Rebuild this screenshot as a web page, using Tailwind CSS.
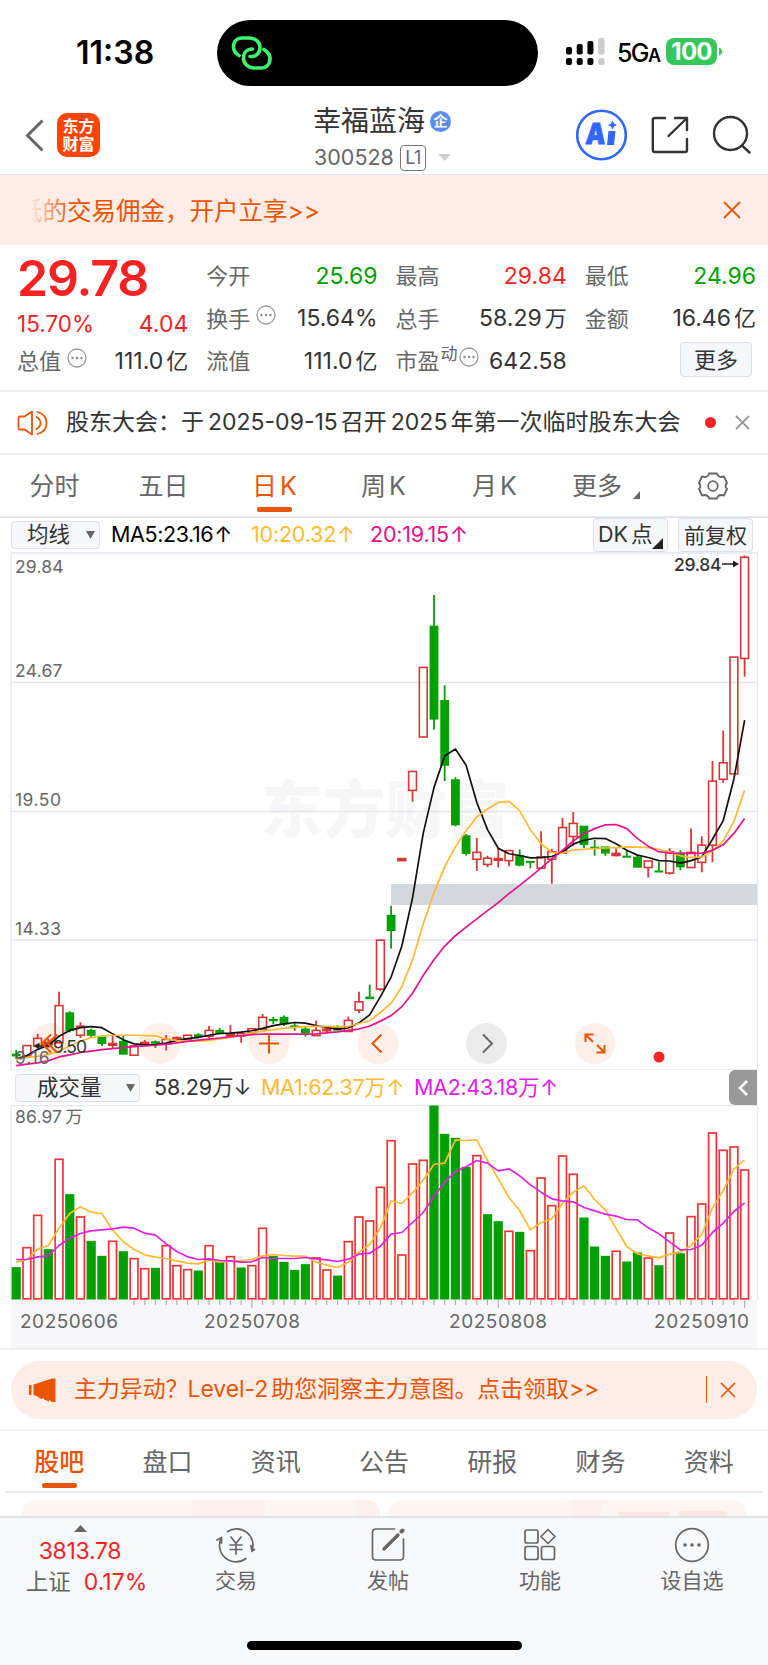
<!DOCTYPE html>
<html lang="zh-CN">
<head>
    <meta charset="UTF-8">
    <meta name="viewport" content="width=device-width, initial-scale=1.0">
    <title>幸福蓝海 300528</title>
    <script src="https://cdn.jsdelivr.net/npm/@tailwindcss/browser@4"></script>
</head>
<body class="bg-white font-[Inter,'Noto_Sans_CJK_SC',sans-serif] text-[#333] leading-none">
<div class="w-[768px] h-[1665px] flex flex-col overflow-hidden whitespace-nowrap">

    <!-- Status bar -->
    <div class="h-[96px] shrink-0 flex items-start">
        <div class="w-[217px] shrink-0 pt-[37px] pl-[76px] text-[32px] font-semibold text-black">11:38</div>
        <div class="w-[321px] shrink-0 h-[66px] mt-[20px] rounded-full bg-black flex items-center pl-[14px]">
            <svg width="42" height="36" viewBox="0 0 42 36" fill="none" stroke="#3cf56e" stroke-width="3.6" stroke-linecap="round">
                <path d="M8 20.500C4 18 2.500 14.500 2.500 12C2.500 6.500 6 3 11 3H18C25 3 29 7.500 29 12.500C29 18 25 21.500 21 21.500H19"/>
                <path d="M33 14.500C37 17 39 20 39 23.500C39 29 35.500 33 30 33H23C17 33 12.500 28.500 12.500 23C12.500 17.500 16 14 21.500 14"/>
            </svg>
        </div>
        <div class="pt-[38px] pl-[28px] flex items-start">
            <svg class="shrink-0" width="40" height="28" viewBox="0 0 40 28">
                <g fill="#000">
                    <rect x="0" y="9" width="6" height="7.500" rx="2"/><rect x="10.700" y="6" width="6" height="10.500" rx="2"/><rect x="21.400" y="3" width="6" height="13.500" rx="2"/>
                    <rect x="0" y="20" width="6" height="7" rx="2"/><rect x="10.700" y="20" width="6" height="7" rx="2"/><rect x="21.400" y="20" width="6" height="7" rx="2"/>
                </g>
                <g fill="#ccc"><rect x="32.100" y="0" width="6.500" height="16.500" rx="2"/><rect x="32.100" y="20" width="6.500" height="7" rx="2"/></g>
            </svg>
            <div class="w-[60px] shrink-0 pl-[11px] pt-[3px] text-[25px] font-medium text-black tracking-[-1.6px]">5G<span class="text-[18px] font-semibold">A</span></div>
            <div class="w-[51px] shrink-0 h-[27px] rounded-[8px] bg-[#34c759] text-white text-[24px] font-bold flex items-center justify-center tracking-[-0.8px]">100</div>
            <svg class="shrink-0" width="5" height="27" viewBox="0 0 5 27"><path d="M2 9.500Q5 10.500 5 13.500T2 17.500Z" fill="#34c759"/></svg>
        </div>
    </div>

    <!-- Header -->
    <header class="h-[79px] shrink-0 flex border-b border-[#e3e8ea]">
        <div class="w-[313px] flex items-start pt-[17px] pl-[25px]">
            <svg class="mt-[6px]" width="19" height="33" viewBox="0 0 19 33" fill="none" stroke="#666" stroke-width="3"><path d="M17.500 1.500L2.500 16.500L17.500 31.500"/></svg>
            <div class="ml-[13px] w-[43px] h-[44px] rounded-[10px] bg-[#ff4400] text-white text-[16px] font-bold leading-[18px] text-center pt-[4px]">东方<br>财富</div>
        </div>
        <div class="w-[263px] pt-[9px]">
            <div class="h-[32px] flex items-center text-[28px]">幸福蓝海
                <span class="ml-[5px] w-[21px] h-[21px] rounded-full bg-[#5b8def] text-white text-[14px] font-bold flex items-center justify-center">企</span>
            </div>
            <div class="mt-[7px] h-[27px] flex items-center text-[21.5px] text-[#666]">
                <span class="w-[87px] pl-[1px]">300528</span>
                <span class="w-[26px] h-[26px] border-[1.5px] border-[#777] rounded-[4px] text-[18px] flex items-center justify-center tracking-[-0.5px]">L1</span>
                <svg class="ml-[12px]" width="13" height="7" viewBox="0 0 13 7"><path d="M0 0H13L6.500 7Z" fill="#ccc"/></svg>
            </div>
        </div>
        <div class="pt-[13px] flex items-start">
            <svg width="51" height="52" viewBox="0 0 51 52">
                <circle cx="25.500" cy="26" r="24.300" fill="none" stroke="#3366ff" stroke-width="2.600"/>
                <text x="9" y="35.500" font-size="29" font-weight="900" fill="#3366ff" stroke="#3366ff" stroke-width="0.800" font-family="Inter" transform="skewX(-4) translate(2.500 0)" textLength="20" lengthAdjust="spacingAndGlyphs">A</text>
                <path d="M32.500 22H39.500L38 36H31Z" fill="#3366ff"/>
                <path d="M36.500 11.500L38 14.500L41 16L38 17.500L36.500 20.500L35 17.500L32 16L35 14.500Z" fill="#3366ff"/>
            </svg>
            <svg class="ml-[24px] mt-[7px]" width="38" height="38" viewBox="0 0 38 38" fill="none" stroke="#333" stroke-width="2.400" stroke-linecap="round" stroke-linejoin="round">
                <path d="M14 2H4Q1.800 2 1.800 4V34Q1.800 36 4 36H34Q36 36 36 34V23M24 2H36V14M36 2L17.500 20"/>
            </svg>
            <svg class="ml-[23px] mt-[6px]" width="40" height="39" viewBox="0 0 40 39" fill="none" stroke="#333" stroke-width="2.400" stroke-linecap="round">
                <circle cx="18.500" cy="18.500" r="16.500"/><path d="M30 30.500L37.500 37.500"/>
            </svg>
        </div>
    </header>

    <!-- Scrolling ad -->
    <div class="h-[70px] shrink-0 bg-[#fdede6] flex items-center justify-between pl-[18px] pr-[27px] text-[#ea5504]">
        <div class="flex items-center text-[24.500px] relative leading-[36px] pt-[2px]">
            <div>低的交易佣金，开户立享&gt;&gt;</div>
            <div class="absolute left-0 top-0 w-[48px] h-full bg-gradient-to-r from-[#fdede6] from-25% to-[#fdede6]/10"></div>
        </div>
        <svg width="18" height="18" viewBox="0 0 18 18" stroke="#ea5504" stroke-width="1.800"><path d="M1 1L17 17M17 1L1 17"/></svg>
    </div>

    <!-- Quote -->
    <section class="h-[147px] shrink-0 border-b-2 border-[#eeeeee] pt-[10px] pl-[17px] pr-[12px] grid grid-cols-4 gap-[18px] text-[22px]">
        <div>
            <div class="h-[46px] flex items-center text-[50px] font-semibold text-[#f72323] tracking-[-1.1px]">29.78</div>
            <div class="h-[47px] flex items-center justify-between text-[22.500px] text-[#f72323]"><span>15.70%</span><span class="text-[23px]">4.04</span></div>
            <div class="h-[26px] flex items-center justify-between">
                <span class="flex items-center text-[#666]">总值
                    <svg class="ml-[6px] -mt-[7px]" width="20" height="20" viewBox="0 0 20 20"><circle cx="10" cy="10" r="9" fill="none" stroke="#999" stroke-width="1.300"/><g fill="#888"><circle cx="5.500" cy="10" r="1.200"/><circle cx="10" cy="10" r="1.200"/><circle cx="14.500" cy="10" r="1.200"/></g></svg>
                </span><span class="text-[23px]">111.0<span class="ml-[3px] text-[22px]">亿</span></span>
            </div>
        </div>
        <div>
            <div class="h-[42.500px] flex items-center justify-between"><span class="text-[#666]">今开</span><span class="text-[23px] text-[#00a000]">25.69</span></div>
            <div class="h-[42.500px] flex items-center justify-between">
                <span class="flex items-center text-[#666]">换手
                    <svg class="ml-[6px] -mt-[8px]" width="20" height="20" viewBox="0 0 20 20"><circle cx="10" cy="10" r="9" fill="none" stroke="#999" stroke-width="1.300"/><g fill="#888"><circle cx="5.500" cy="10" r="1.200"/><circle cx="10" cy="10" r="1.200"/><circle cx="14.500" cy="10" r="1.200"/></g></svg>
                </span><span class="text-[23px]">15.64%</span>
            </div>
            <div class="h-[42.500px] flex items-center justify-between"><span class="text-[#666]">流值</span><span class="text-[23px]">111.0<span class="ml-[3px] text-[22px]">亿</span></span></div>
        </div>
        <div>
            <div class="h-[42.500px] flex items-center justify-between"><span class="text-[#666]">最高</span><span class="text-[23px] text-[#f72323]">29.84</span></div>
            <div class="h-[42.500px] flex items-center justify-between"><span class="text-[#666]">总手</span><span class="text-[23px]">58.29<span class="ml-[3px] text-[22px]">万</span></span></div>
            <div class="h-[42.500px] flex items-center justify-between">
                <span class="flex items-center text-[#666]">市盈<span class="text-[17px] -mt-[13px] ml-[1px]">动</span>
                    <svg class="ml-[1px] -mt-[8px]" width="20" height="20" viewBox="0 0 20 20"><circle cx="10" cy="10" r="9" fill="none" stroke="#999" stroke-width="1.300"/><g fill="#888"><circle cx="5.500" cy="10" r="1.200"/><circle cx="10" cy="10" r="1.200"/><circle cx="14.500" cy="10" r="1.200"/></g></svg>
                </span><span class="text-[23px]">642.58</span>
            </div>
        </div>
        <div>
            <div class="h-[42.500px] flex items-center justify-between"><span class="text-[#666]">最低</span><span class="text-[23px] text-[#00a000]">24.96</span></div>
            <div class="h-[42.500px] flex items-center justify-between"><span class="text-[#666]">金额</span><span class="text-[23px]">16.46<span class="ml-[3px] text-[22px]">亿</span></span></div>
            <div class="h-[42.500px] flex items-start justify-end pt-[2px] pr-[4px]"><button class="w-[72px] h-[35px] rounded-[4px] border border-[#dcdfe6] bg-[#f6f7fa]">更多</button></div>
        </div>
    </section>

    <!-- Notice -->
    <div class="h-[63px] shrink-0 border-b-2 border-[#eeeeee] flex items-center pl-[17px] pr-[18px]">
        <svg width="32" height="26" viewBox="0 0 32 26" fill="none" stroke="#ea5504" stroke-width="1.800" stroke-linejoin="round" stroke-linecap="round">
            <path d="M15 1.500V24.500L7.500 19.500H3Q1.500 19.500 1.500 18V8Q1.500 6.500 3 6.500H7.500ZM19.500 7Q23.500 9 23.500 13T19.500 19M20.500 2Q29.500 4.500 29.500 13T20.500 24"/>
        </svg>
        <div class="ml-[17px] w-[622px] text-[23px]">股东大会：于<span class="ml-[4px] mr-[3px]">2025-09-15</span>召开<span class="ml-[4px] mr-[3px]">2025</span>年第一次临时股东大会</div>
        <div class="ml-[17px] w-[11px] h-[11px] rounded-full bg-[#f72323]"></div>
        <svg class="ml-auto" width="15" height="15" viewBox="0 0 15 15" stroke="#999" stroke-width="1.800"><path d="M1 1L14 14M14 1L1 14"/></svg>
    </div>

    <!-- Period tabs -->
    <nav class="h-[63px] shrink-0 border-b-2 border-[#e2e4ec] flex text-[25px] text-[#666]">
        <div class="w-[109px] pt-[19px] text-center">分时</div>
        <div class="w-[109px] pt-[19px] text-center">五日</div>
        <div class="w-[113px] pt-[19px] flex flex-col items-center text-[#ea5504]">
            <div>日<span class="ml-[3px]">K</span></div>
            <div class="mt-[8px] w-[35px] h-[5px] rounded-[2px] bg-[#ea5504]"></div>
        </div>
        <div class="w-[105px] pt-[19px] text-center">周<span class="ml-[3px]">K</span></div>
        <div class="w-[117px] pt-[19px] text-center">月<span class="ml-[3px]">K</span></div>
        <div class="w-[117px] pt-[19px] pl-[19px] flex">更多<svg class="ml-[11px] mt-[17px]" width="7" height="8" viewBox="0 0 7 8"><path d="M7 0V8H0Z" fill="#666"/></svg></div>
        <div class="pt-[17px] pl-[28px]">
            <svg width="30" height="28" viewBox="0 0 30 28" fill="none" stroke="#666" stroke-width="1.800" stroke-linejoin="round">
                <path d="M11 1.500H19Q20 5 23.500 5L26 4.500L29 11Q26 14 29 17L26 23.500L23.500 23Q20 23 19 26.500H11Q10 23 6.500 23L4 23.500L1 17Q4 14 1 11L4 4.500L6.500 5Q10 5 11 1.500Z"/>
                <circle cx="15" cy="14" r="4.800"/>
            </svg>
        </div>
    </nav>

    <!-- MA toolbar -->
    <div class="h-[34px] shrink-0 flex items-center pl-[11px] pr-[15px] text-[21.500px]">
        <div class="w-[89px] h-[28px] rounded-[4px] border border-[#dcdfe6] bg-[#f6f7fa] flex items-center justify-between pl-[15px] pr-[4px]">均线
            <svg width="9" height="8" viewBox="0 0 9 8"><path d="M0 0H9L4.500 8Z" fill="#666"/></svg>
        </div>
        <div class="ml-[11px] w-[140px] text-black tracking-[-0.4px]">MA5:23.16<span class="ml-[1px]">↑</span></div>
        <div class="w-[119px] text-[#ffb933] tracking-[-0.2px]">10:20.32<span class="ml-[1px]">↑</span></div>
        <div class="text-[#e8108c] tracking-[-0.2px]">20:19.15<span class="ml-[1px]">↑</span></div>
        <div class="ml-auto w-[75px] h-[34px] rounded-[4px] border border-[#dcdfe6] bg-[#f6f7fa] flex items-center pl-[4px] relative">DK<span class="ml-[3px]">点</span>
            <svg class="absolute right-[4px] bottom-[2px]" width="11" height="11" viewBox="0 0 11 11"><path d="M11 0V11H0Z" fill="#222"/></svg>
        </div>
        <div class="ml-[10px] w-[75px] h-[34px] rounded-[4px] border border-[#dcdfe6] bg-[#f6f7fa] flex items-center justify-center text-[21px]">前复权</div>
    </div>

    <!-- Candles -->
    <div class="h-[518px] shrink-0">
        <svg id="kline" class="block" width="768" height="518" viewBox="0 0 768 518" font-family="Inter, 'Noto Sans CJK SC', sans-serif">
            <text x="261" y="281" font-size="62" font-weight="900" fill="#f6f6f6" textLength="248">东方财富</text>
            <path d="M11 1H757.500V518H11ZM11 130.500H757M11 259.500H757M11 388H757" fill="none" stroke="#e4e6f0" stroke-width="1.300"/>
            <rect x="391" y="332" width="366" height="21" fill="#d4d7dc"/>
            <g fill="#fef0e9">
                <circle cx="51" cy="491.500" r="20.500"/><circle cx="160" cy="491.500" r="20.500"/><circle cx="269" cy="491.500" r="20.500"/><circle cx="378" cy="491.500" r="20.500"/><circle cx="595" cy="491.500" r="20.500"/>
            </g>
            <circle cx="486.500" cy="491.500" r="20.500" fill="#ebebeb"/>
            <g id="candles"></g>
            <g id="priceLines" fill="none" stroke-width="1.700" stroke-linejoin="round"></g>
            <g font-size="17.500" fill="#666">
                <text x="15" y="20.500" textLength="48.500">29.84</text>
                <text x="15" y="124.500" textLength="47.500">24.67</text>
                <text x="15" y="253.500" textLength="46">19.50</text>
                <text x="15" y="382.500" textLength="46">14.33</text>
                <text x="15" y="511.500" textLength="34.500">9.16</text>
            </g>
            <g font-size="17.500" fill="#333">
                <text x="53" y="501" textLength="34">9.50</text>
                <text x="674" y="19" textLength="47.500" font-weight="500">29.84</text>
            </g>
            <path d="M38 494H50M722 12H735" stroke="#222" stroke-width="1.500"/>
            <path d="M33.500 494L39.500 490.500V497.500ZM739 12L733 8.500V15.500Z" fill="#222"/>
            <g fill="none" stroke="#ea5504" stroke-width="2">
                <path d="M51 482.500L42 491.500L51 500.500M57 482.500L48 491.500L57 500.500" stroke-width="2.200"/>
                <path d="M259 491.500H279M269 481.500V501.500M381.500 482.500L372.500 491.500L381.500 500.500"/>
                <path d="M585.500 490V482.500H593.500M586 483L593 490M604.500 493V500.500H596.500M604 500L597 493"/>
            </g>
            <path d="M483 482.500L492 491.500L483 500.500" fill="none" stroke="#666" stroke-width="1.900"/>
            <circle cx="659" cy="505" r="5.500" fill="#f72323"/>
        </svg>
    </div>

    <!-- Volume toolbar -->
    <div class="h-[35px] shrink-0 flex items-center pl-[15px] pr-[11px] text-[21.500px]">
        <div class="w-[125px] h-[28px] rounded-[4px] border border-[#dcdfe6] bg-[#f6f7fa] flex items-center justify-between pl-[21px] pr-[4px]">成交量
            <svg width="9" height="8" viewBox="0 0 9 8"><path d="M0 0H9L4.500 8Z" fill="#666"/></svg>
        </div>
        <div class="ml-[14px] w-[107px] tracking-[-0.1px]">58.29万<span>↓</span></div>
        <div class="w-[153px] text-[#ffb933] tracking-[-0.3px]">MA1:62.37万<span class="ml-[1px]">↑</span></div>
        <div class="text-[#e020e8] tracking-[-0.3px]">MA2:43.18万<span class="ml-[1px]">↑</span></div>
        <div class="ml-auto w-[28px] h-[35px] rounded-l-[6px] bg-[#999] flex items-center justify-center">
            <svg width="10" height="16" viewBox="0 0 10 16" fill="none" stroke="#fff" stroke-width="2.500"><path d="M9 1L2 8L9 15"/></svg>
        </div>
    </div>

    <!-- Volume bars -->
    <div class="h-[245px] shrink-0 border-b-2 border-[#eeeeee]">
        <svg class="block" width="768" height="243" viewBox="0 0 768 243" font-family="Inter, 'Noto Sans CJK SC', sans-serif">
            <rect x="11" y="195" width="746" height="48" fill="#f7f7fa"/>
            <path d="M11 195V0.500H757.500V195" fill="none" stroke="#e4e6f0" stroke-width="1.300"/>
            <g id="bars"></g>
            <g id="volumeLines" fill="none" stroke-width="1.700" stroke-linejoin="round"></g>
            <text x="15" y="18" font-size="17.500" fill="#666"><tspan textLength="47">86.97</tspan><tspan dx="3">万</tspan></text>
            <g font-size="19" fill="#666">
                <text x="20" y="223" textLength="98">20250606</text>
                <text x="204" y="223" textLength="96">20250708</text>
                <text x="449" y="223" textLength="98">20250808</text>
                <text x="654" y="223" textLength="95">20250910</text>
            </g>
        </svg>
    </div>

    <!-- Level-2 ad -->
    <div class="h-[81px] shrink-0 border-b-2 border-[#f2f2f4] flex items-center px-[11px]">
        <div class="w-full h-[58px] rounded-full bg-[#fdede6] flex items-center pl-[17px] pr-[21px] text-[22.900px] text-[#ea5504]">
            <svg width="29" height="26" viewBox="0 0 29 26" fill="#ea5504"><path d="M1 8H3.500V18H1ZM5.500 7.500L24 1.500H27.500V25H24L21 23V24.500L16 22.500V21L13 22L9.500 19.500L5.500 18Z"/></svg>
            <div class="ml-[17px]">主力异动？<span class="mr-[3px] -ml-[1px]">Level-2</span>助您洞察主力意图。点击领取&gt;&gt;</div>
            <div class="ml-auto w-[1.500px] h-[27px] bg-[#ea5504]"></div>
            <svg class="ml-[13px]" width="16" height="16" viewBox="0 0 16 16" stroke="#ea5504" stroke-width="1.700"><path d="M1 1L15 15M15 1L1 15"/></svg>
        </div>
    </div>

    <!-- Content tabs -->
    <nav class="h-[62px] shrink-0 mx-[5px] border-b-2 border-[#ebedf0] grid grid-cols-7 text-[25px] text-[#666] text-center">
        <div class="pt-[19px] flex flex-col items-center text-[#ea5504] font-medium">股吧<div class="mt-[8px] w-[35px] h-[5px] rounded-[2px] bg-[#ea5504]"></div></div>
        <div class="pt-[19px]">盘口</div>
        <div class="pt-[19px]">资讯</div>
        <div class="pt-[19px]">公告</div>
        <div class="pt-[19px]">研报</div>
        <div class="pt-[19px]">财务</div>
        <div class="pt-[19px]">资料</div>
    </nav>

    <!-- Cards cut off by the bottom bar -->
    <div class="h-[23px] shrink-0 pt-[7px] px-[22px] flex gap-[8px]">
        <div class="flex-1 rounded-t-[14px] bg-[#fef5f2] flex justify-end overflow-hidden"><div class="w-[72px] bg-[#fdf0ee] mr-[91px]"></div><div class="w-[24px] bg-[#fdf0ee]"></div></div>
        <div class="flex-1 rounded-t-[14px] bg-[#fef5f2] flex overflow-hidden"><div class="ml-[184px] w-[30px] bg-[#fdf0ee]"></div><div class="ml-[16px] mt-[12px] w-[52px] bg-[#fce6e3]"></div><div class="ml-[8px] mt-[11px] w-[50px] rounded-t-[12px] bg-[#fce6e3]"></div></div>
    </div>

    <!-- Bottom bar -->
    <footer class="flex-1 bg-[#f6f8fa] border-t-2 border-[#dfe2e6] flex flex-col text-[21px] text-[#666]">
        <div class="flex h-[122px]">
            <div class="w-[160px] pt-[7px] flex flex-col items-center text-[23px]">
                <svg width="13" height="7" viewBox="0 0 13 7"><path d="M0 7H13L6.500 0Z" fill="#666"/></svg>
                <div class="mt-[8px] text-[#f72323] tracking-[-0.3px]">3813.78</div>
                <div class="mt-[8px] ml-[13px] flex items-center gap-[13px] text-[22.500px]">上证<span class="text-[23px] text-[#f72323]">0.17%</span></div>
            </div>
            <div class="w-[152px] pt-[9px] flex flex-col items-center">
                <svg width="40" height="36" viewBox="0 0 40 36" fill="none" stroke="#666" stroke-width="1.700" stroke-linecap="round" stroke-linejoin="round">
                    <path d="M11.500 4.500A16.500 16.500 0 0 1 36 24M36 24L38.500 22.500M36 24.500L35 18.500M30 31.500A16.500 16.500 0 0 1 5.500 10.500M5.500 10.500L1 13M5.500 10.500V16"/>
                    <path d="M15 10L20 16.500L25 10M20 16.500V27M14 18H26M14 22.500H26"/>
                </svg>
                <div class="mt-[7px]">交易</div>
            </div>
            <div class="w-[152px] pt-[9px] flex flex-col items-center">
                <svg width="34" height="36" viewBox="0 0 34 36" fill="none" stroke="#666" stroke-width="1.700" stroke-linecap="round">
                    <path d="M23.500 2H5Q1.500 2 1.500 5.500V29.500Q1.500 33 5 33H29Q32.500 33 32.500 29.500V12"/>
                    <path d="M13 22L27 8" stroke-width="3.400"/><path d="M30.500 4.500L31.500 3.500" stroke-width="4"/>
                </svg>
                <div class="mt-[7px]">发帖</div>
            </div>
            <div class="w-[152px] pt-[9px] flex flex-col items-center">
                <svg width="34" height="36" viewBox="0 0 34 36" fill="none" stroke="#666" stroke-width="1.700" stroke-linejoin="round">
                    <rect x="2" y="3" width="13" height="13" rx="2"/><rect x="2" y="19.500" width="13" height="13" rx="2"/><rect x="18.500" y="19.500" width="13" height="13" rx="2"/>
                    <path d="M25 2.500L32 9.500L25 16.500L18 9.500Z"/>
                </svg>
                <div class="mt-[7px]">功能</div>
            </div>
            <div class="w-[152px] pt-[9px] flex flex-col items-center">
                <svg width="36" height="36" viewBox="0 0 36 36"><circle cx="18" cy="18" r="16.300" fill="none" stroke="#666" stroke-width="1.700"/><g fill="#666"><circle cx="11" cy="18" r="1.800"/><circle cx="18" cy="18" r="1.800"/><circle cx="25" cy="18" r="1.800"/></g></svg>
                <div class="mt-[7px]">设自选</div>
            </div>
        </div>
        <div class="mt-[1px] mx-auto w-[275px] h-[9px] rounded-full bg-black"></div>
    </footer>
</div>

<script>
    const STEP = 10.712, X0 = 16.2;
    const x = i => X0 + i * STEP;

    // price pane: data units to pixels
    const py = v => v / 2.9037 - 2;

    // [type, open/close top, open/close bottom, high, low]
    const candles = [
        ['g',1464,1469,1452,1478],['r',1439,1469,1439,1474],['r',1418,1440,1405,1445],['r',1430,1436,1420,1445],['r',1323,1431,1283,1431],
        ['g',1344,1395,1339,1400],['r',1383,1409,1371,1417],['g',1395,1409,1390,1415],['g',1414,1433,1414,1440],['r',1433,1438,1410,1447],
        ['g',1427,1464,1411,1464],['r',1440,1467,1440,1467],['r',1430,1434,1423,1438],['g',1428,1432,1424,1446],['r',1421,1434,1408,1453],
        ['r',1416,1420,1413,1420],['r',1409,1420,1409,1420],['g',1408,1413,1403,1418],['r',1395,1412,1382,1417],['g',1395,1402,1388,1406],
        ['r',1405,1410,1379,1417],['r',1404,1411,1404,1431],['r',1390,1402,1390,1402],['r',1357,1391,1347,1391],['g',1363,1367,1356,1376],
        ['g',1357,1376,1352,1382],['g',1382,1385,1374,1396],['g',1391,1402,1385,1413],['r',1395,1410,1366,1410],['r',1391,1396,1386,1400],
        ['g',1388,1394,1380,1394],['r',1366,1398,1355,1398],['r',1312,1336,1283,1345],['g',1298,1303,1262,1303],['r',1133,1275,1133,1280],
        ['g',1061,1105,1033,1157],['r',896,902,896,902],['r',643,698,643,731],['r',341,543,341,543],['g',221,491,131,522],
        ['g',437,625,393,671],['g',667,798,660,802],['g',830,881,825,887],['r',878,898,836,932],['r',895,913,888,921],
        ['r',896,901,866,922],['r',873,902,873,918],['g',888,915,870,918],['g',904,907,904,924],['r',891,924,817,924],
        ['r',876,898,868,969],['r',806,880,778,880],['r',794,832,761,860],['g',802,855,802,865],['g',863,866,842,888],
        ['g',862,880,862,888],['r',881,887,866,890],['g',889,892,870,892],['g',892,921,886,921],['r',903,922,903,951],
        ['g',932,935,905,935],['r',876,938,866,943],['g',880,920,872,930],['r',878,922,809,922],['r',857,907,831,936],
        ['r',671,857,613,907],['r',618,666,524,676],['r',311,650,311,650],['r',21,315,16,367]
    ];

    const priceLines = [
        ['#111', [1478,1468,1450,1438,1412,1395,1387,1384,1387,1405,1422,1434,1437,1436,1432,1424,1419,1415,1409,1404,1403,1400,1396,1389,1381,1376,1372,1374,1381,1386,1391,1388,1373,1350,1297,1240,1150,1010,822,690,598,578,625,733,812,866,882,887,894,893,890,877,854,843,837,838,853,872,886,893,902,903,909,902,891,840,786,665,494]],
        ['#ffb933', [1478,1474,1470,1465,1455,1440,1426,1416,1411,1409,1409,1409,1410,1411,1420,1424,1426,1426,1424,1420,1415,1410,1402,1397,1393,1389,1386,1384,1383,1383,1384,1383,1375,1367,1343,1316,1268,1190,1085,995,920,862,815,775,752,733,730,757,812,853,878,880,871,869,867,865,864,862,863,864,869,877,888,893,891,874,845,788,698]],
        ['#e8108c', [1497,1493,1489,1483,1472,1466,1459,1455,1451,1448,1445,1442,1440,1438,1435,1431,1427,1423,1420,1417,1413,1410,1407,1406,1406,1406,1406,1406,1405,1402,1399,1395,1391,1382,1368,1352,1326,1287,1235,1190,1150,1120,1095,1071,1047,1024,998,974,949,923,897,872,845,823,809,798,797,809,838,860,876,880,881,881,880,872,856,823,780]]
    ];

    // volume heights, one third of a pixel each
    const volumes = [97,157,254,151,422,316,249,176,131,176,145,124,94,95,163,103,91,87,163,113,130,96,103,215,131,113,89,106,126,90,72,175,249,237,338,478,135,408,419,582,497,485,398,433,256,235,206,203,148,366,283,432,377,246,159,131,146,114,141,126,103,201,139,250,288,501,449,459,390];
    const volumeGreen = [0,3,5,7,8,10,13,17,19,21,24,25,26,27,30,39,40,41,42,44,45,47,53,54,55,57,58,60,62];
    const volumeLines = [
        ['#ffb933', [112,120,151,162,214,258,278,262,258,208,174,150,134,127,123,116,109,107,119,112,116,117,120,131,135,132,130,130,112,103,96,112,142,165,215,296,288,320,358,405,409,479,477,479,417,362,306,267,209,231,242,288,322,341,300,269,213,159,137,131,125,136,142,163,195,275,327,391,419]],
        ['#e020e8', [120,120,128,131,162,184,198,206,209,212,217,214,199,193,167,144,128,120,122,117,116,112,113,126,123,123,123,126,122,119,114,121,136,139,160,196,201,231,261,310,352,383,398,417,409,386,392,371,344,322,302,296,293,276,266,256,250,240,239,215,197,173,149,150,163,201,229,264,290]]
    ];

    const polyline = (color, points) => `<polyline stroke="${color}" points="${points.join(' ')}"/>`;

    document.getElementById('candles').innerHTML = candles.map(([type, top, bottom, high, low], i) => {
        const color = type === 'g' ? '#00a000' : '#d93636';
        const y1 = py(top), h = Math.max(py(bottom) - y1, 1);
        // very short red bodies are filled in
        const fill = bottom - top < 7 ? color : 'none';
        const body = type === 'g'
            ? `<rect x="${x(i) - 4.4}" y="${y1 - 0.5}" width="8.8" height="${h + 1}" fill="${color}"/>`
            : `<rect x="${x(i) - 3.9}" y="${y1}" width="7.8" height="${h}" fill="${fill}" stroke="${color}" stroke-width="1.6"/>`;
        return `<path d="M${x(i)} ${py(high)}V${y1}M${x(i)} ${y1 + h}V${py(low)}" stroke="${color}" stroke-width="1.8"/>${body}`;
    }).join('');

    document.getElementById('priceLines').innerHTML = priceLines.map(([color, values]) =>
        polyline(color, values.map((v, i) => `${x(i)},${py(v)}`))).join('');

    document.getElementById('bars').innerHTML = volumes.map((v, i) => {
        const h = v / 3;
        const bar = volumeGreen.includes(i)
            ? `<rect x="${x(i) - 4.6}" y="${194.5 - h}" width="9.2" height="${h}" fill="#00a000"/>`
            : `<rect x="${x(i) - 3.9}" y="${195 - h}" width="7.8" height="${h - 1.2}" fill="#fff" stroke="#f53333" stroke-width="1.7"/>`;
        const tick = i < 11 ? '' : `<path d="M${x(i)} 195V${[22, 45, 68].includes(i) ? 203 : 200}" stroke="#aaa" stroke-width="1.1"/>`;
        return bar + tick;
    }).join('');

    document.getElementById('volumeLines').innerHTML = volumeLines.map(([color, values]) =>
        polyline(color, values.map((v, i) => `${x(i)},${194.5 - v / 3}`))).join('');
</script>
</body>
</html>
